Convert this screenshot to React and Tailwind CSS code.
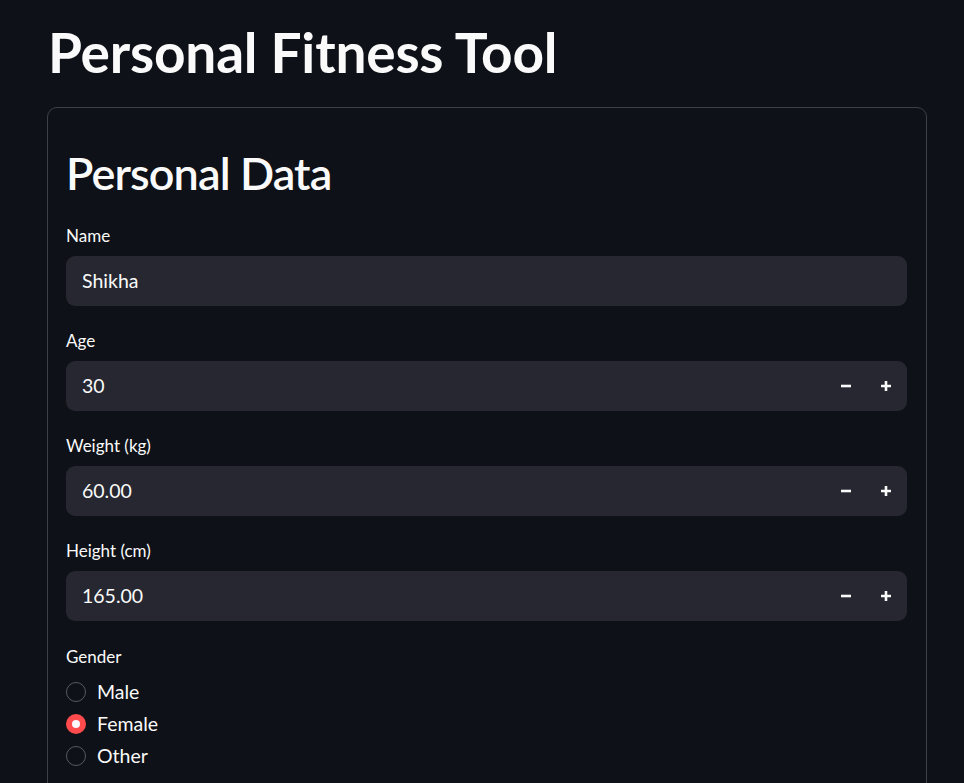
import { useState } from "react";

const fields = [
  { label: "Name", value: "Shikha", stepper: false },
  { label: "Age", value: "30", stepper: true },
  { label: "Weight (kg)", value: "60.00", stepper: true },
  { label: "Height (cm)", value: "165.00", stepper: true },
];

const Minus = () => (
  <svg width="14" height="14" viewBox="0 0 14 14" fill="none">
    <path d="M2 7h10" stroke="#fafafa" strokeWidth="2.6" />
  </svg>
);

const Plus = () => (
  <svg width="14" height="14" viewBox="0 0 14 14" fill="none">
    <path d="M2 7h10M7 2v10" stroke="#fafafa" strokeWidth="2.6" />
  </svg>
);

const Field = ({ label, value, stepper }) => (
  <div className="mb-[23px]">
    <div className="h-[22px] text-[17px] leading-[24px] mb-[10px]">{label}</div>
    <div className="h-[50px] rounded-[9px] bg-[#262730] flex items-center">
      <div className="flex-1 pl-[16px] text-[19.5px]">{value}</div>
      {stepper && (
        <div className="flex h-full pr-[1px]">
          <button className="w-[40px] h-full flex items-center justify-center">
            <Minus />
          </button>
          <button className="w-[40px] h-full flex items-center justify-center">
            <Plus />
          </button>
        </div>
      )}
    </div>
  </div>
);

const App = () => {
  const [gender, setGender] = useState("Female");

  return (
    <div
      className="min-h-screen bg-[#0e1117] text-[#fafafa] overflow-hidden"
      style={{ fontFamily: "Lato, 'Noto Sans', sans-serif" }}
    >
      <div className="px-[47px] pt-[19px] w-[974px]">
        <h1 className="text-[55px] font-bold leading-[66px] pl-px tracking-[-0.2px]">
          Personal Fitness Tool
        </h1>

        <div className="mt-[22px] border border-[#3d4046] rounded-[10px] pl-[18px] pr-[19px] pt-[38px] pb-[40px]">
          <h2 className="text-[45px] font-semibold leading-[54px] mb-[24px] tracking-[-0.9px]">
            Personal Data
          </h2>

          {fields.map((f) => (
            <Field key={f.label} {...f} />
          ))}

          <div className="h-[22px] text-[17px] leading-[25px] mb-[10px]">Gender</div>
          <div className="flex flex-col mt-[1px]">
            {["Male", "Female", "Other"].map((g) => (
              <label
                key={g}
                onClick={() => setGender(g)}
                className="h-[32px] flex items-center gap-[11px] cursor-pointer"
              >
                {gender === g ? (
                  <span className="w-[20px] h-[20px] rounded-full bg-[#ff4b4b] flex items-center justify-center">
                    <span className="w-[8px] h-[8px] rounded-full bg-[#fafafa]" />
                  </span>
                ) : (
                  <span className="w-[20px] h-[20px] rounded-full border-[1.5px] border-[#585a61]" />
                )}
                <span className="text-[19.5px]">{g}</span>
              </label>
            ))}
          </div>
        </div>
      </div>
    </div>
  );
};

export default App;
